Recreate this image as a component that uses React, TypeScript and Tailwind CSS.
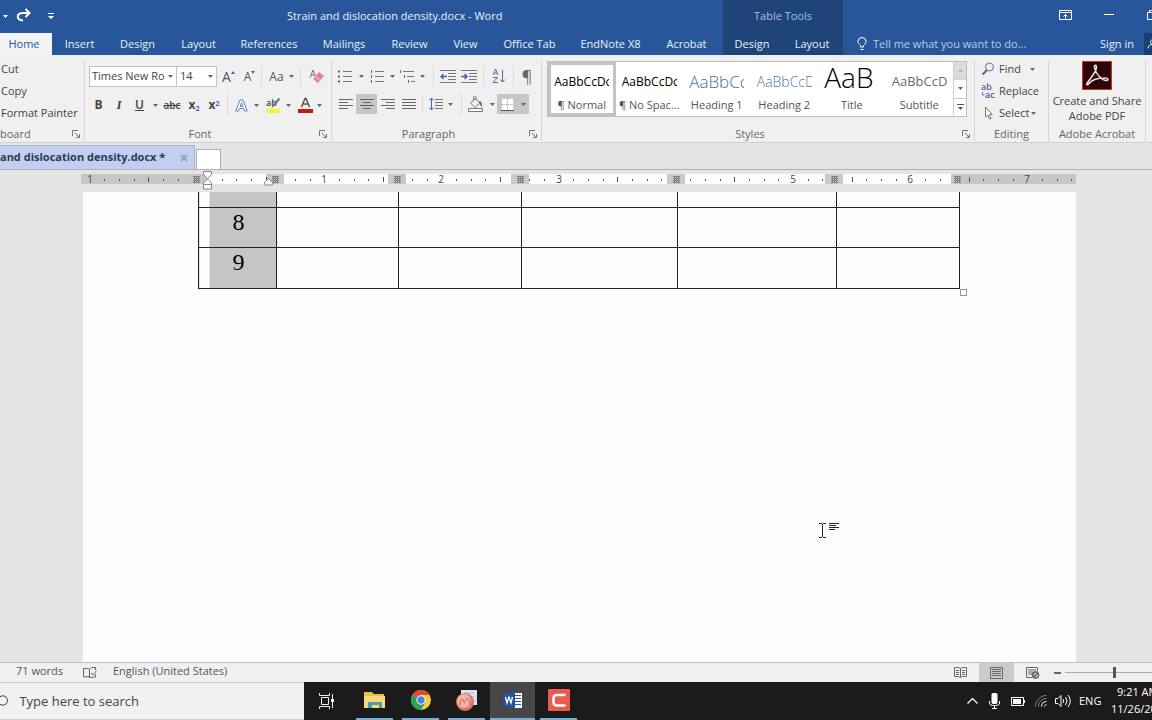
import type { ReactNode } from "react";
import clsx from "clsx";

const tabs = [
  { label: "Insert", width: "w-[55px]" },
  { label: "Design", width: "w-[61px]" },
  { label: "Layout", width: "w-[61px]" },
  { label: "References", width: "w-[80px]" },
  { label: "Mailings", width: "w-[70px]" },
  { label: "Review", width: "w-[61px]" },
  { label: "View", width: "w-[51px]" },
  { label: "Office Tab", width: "w-[77px]" },
  { label: "EndNote X8", width: "w-[85px]" },
  { label: "Acrobat", width: "w-[67px]" },
];

const styles = [
  { name: "¶ Normal", sample: "AaBbCcDc", look: "text-xs text-black" },
  { name: "¶ No Spac...", sample: "AaBbCcDc", look: "text-xs text-black" },
  { name: "Heading 1", sample: "AaBbCc", look: "text-[17px] font-light text-[#3f719f]" },
  { name: "Heading 2", sample: "AaBbCcD", look: "text-sm font-light text-[#4a79a5]" },
  { name: "Title", sample: "AaB", look: "text-[28px] font-light text-black" },
  { name: "Subtitle", sample: "AaBbCcD", look: "text-[13px] text-[#6a6a6a]" },
];

const columns = ["w-[78px]", "w-[122px]", "w-[123px]", "w-[156px]", "w-[159px]", "w-[123px]"];

const rows = [
  { value: "", height: "h-[15px]" },
  { value: "8", height: "h-10" },
  { value: "9", height: "h-[41px]" },
];

function Caret({ className = "w-[10px]" }: { className?: string }) {
  return (
    <span className={clsx("flex shrink-0 items-center justify-center text-[#666]", className)}>
      <svg width="5" height="3" viewBox="0 0 5 3" fill="currentColor">
        <path d="M0 0h5L2.5 3z" />
      </svg>
    </span>
  );
}

function Tool({ label, className, children }: { label: string; className: string; children: ReactNode }) {
  return (
    <button aria-label={label} className={clsx("flex h-5 shrink-0 items-center justify-center", className)}>
      {children}
    </button>
  );
}

function Divider({ className }: { className?: string }) {
  return <span className={clsx("h-5 w-px shrink-0 bg-[#dadada]", className)} />;
}

function Lines({ rows }: { rows: [number, number][] }) {
  return (
    <svg width="14" height="12" viewBox="0 0 14 12" stroke="#666">
      {rows.map(([from, to], i) => (
        <path key={i} d={`M${from} ${i * 3 + 1.5}H${to}`} />
      ))}
    </svg>
  );
}

function Group({
  label,
  className,
  launcher,
  children,
}: {
  label: string;
  className: string;
  launcher?: boolean;
  children: ReactNode;
}) {
  return (
    <section className={clsx("flex h-20 flex-col border-r border-[#d5d5d5]", className)}>
      <div className="h-[66px] shrink-0">{children}</div>
      <div className="flex h-[14px] items-center px-1 text-[11px] leading-[14px] text-[#666]">
        <span
          className={clsx(
            "flex-1 whitespace-nowrap",
            label === "board" ? "-ml-1" : "text-center",
            launcher && "pr-2",
          )}
        >
          {label}
        </span>
        {launcher && (
          <button aria-label={`${label} settings`}>
            <svg width="8" height="8" viewBox="0 0 8 8" fill="none" stroke="#777">
              <path d="M.5 6V.5H6M3 3l4 4M7.5 4v3.5H4" />
            </svg>
          </button>
        )}
      </div>
    </section>
  );
}

function TitleBar() {
  return (
    <header className="flex h-[55px] shrink-0 bg-[#27579a] text-[11px] text-[#e8f0fb]">
      <div className="flex w-[723px] shrink-0 flex-col">
        <div className="flex h-[33px] items-center">
          <Caret className="w-[11px] text-white" />
          <button aria-label="Redo" className="mb-1 ml-1">
            <svg width="18" height="16" viewBox="0 0 18 16" fill="none" stroke="white" strokeWidth="2">
              <path d="M8 13.500C1 13 1 6 8 6h6M10.500 2 14.500 6l-4 4" />
            </svg>
          </button>
          <button aria-label="Customize quick access" className="ml-[15px]">
            <svg width="6" height="7" viewBox="0 0 6 7" fill="white">
              <path d="M0 0h6v1H0zM0 3h6L3 6z" />
            </svg>
          </button>
          <h1 className="ml-[233px] whitespace-nowrap text-[11px]">Strain and dislocation density.docx - Word</h1>
        </div>
        <nav className="flex h-[22px]">
          <button className="w-[52px] bg-[#f2f3f5] pr-1 text-[#2b579a]">Home</button>
          {tabs.map((tab) => (
            <button key={tab.label} className={clsx("whitespace-nowrap", tab.width)}>
              {tab.label}
            </button>
          ))}
        </nav>
      </div>
      <div className="flex w-[120px] shrink-0 flex-col bg-[#1f4478]">
        <div className="flex h-[33px] items-center justify-center text-[#a9bfe0]">Table Tools</div>
        <div className="flex h-[22px]">
          <button className="w-[58px]">Design</button>
          <button className="w-[62px]">Layout</button>
        </div>
      </div>
      <div className="flex min-w-0 flex-1 flex-col">
        <div className="flex h-[29px] items-center justify-end">
          <button aria-label="Ribbon display options">
            <svg width="13" height="10" viewBox="0 0 13 10" fill="none" stroke="white">
              <path d="M.5.5h12v9H.5zM.5 2.500h12M6.500 8.500v-4M4.500 6.500l2-2 2 2" />
            </svg>
          </button>
          <button aria-label="Minimize" className="ml-8 h-px w-[10px] bg-white" />
          <button aria-label="Restore" className="ml-[33px]">
            <svg width="5" height="10" viewBox="0 0 5 10" fill="none" stroke="white">
              <path d="M5 2.500H.5v7H5M2.500 2.500v-2H5" />
            </svg>
          </button>
        </div>
        <div className="mt-1 flex h-[22px] items-center">
          <svg className="ml-[14px] shrink-0" width="10" height="14" viewBox="0 0 10 14" fill="none" stroke="white">
            <path d="M3.500 10V8.500C2 7 1 6 1 4.500a4 4 0 0 1 8 0C9 6 8 7 6.500 8.500V10zM3.500 12.500h3" />
          </svg>
          <input
            aria-label="Tell me what you want to do"
            placeholder="Tell me what you want to do..."
            className="ml-1.5 min-w-0 flex-1 bg-transparent placeholder:text-[#b4cbed] placeholder:opacity-100"
          />
          <button className="mr-[10px] whitespace-nowrap">Sign in</button>
          <button aria-label="Share" className="flex h-[22px] w-2 items-center justify-end bg-[#1a3f75]">
            <svg width="5" height="10" viewBox="0 0 5 10" fill="none" stroke="white">
              <path d="M5 1C3 1 3 5 5 5M1 9.500C1 7 3 5.500 5 5.500" />
            </svg>
          </button>
        </div>
      </div>
    </header>
  );
}

function FontGroup() {
  return (
    <Group label="Font" className="w-[247px] shrink-0" launcher>
      <div className="flex items-center pt-[5px] pl-1">
        <div className="relative">
          <select
            aria-label="Font name"
            className="h-[21px] w-[88px] appearance-none border border-[#c3c3c3] bg-white pl-0.5 text-[11px] text-[#444]"
          >
            <option>Times New Ro</option>
          </select>
          <Caret className="pointer-events-none absolute top-[9px] right-1 w-[6px]" />
        </div>
        <div className="relative">
          <select
            aria-label="Font size"
            className="h-[21px] w-10 appearance-none border border-l-0 border-[#c3c3c3] bg-white pl-[3px] text-[11px] text-[#444]"
          >
            <option>14</option>
          </select>
          <Caret className="pointer-events-none absolute top-[9px] right-1 w-[6px]" />
        </div>
        <Tool label="Grow font" className="ml-px w-[21px] text-sm text-[#555]">
          A
          <svg className="mb-2" width="4" height="3" viewBox="0 0 4 3" fill="#3c68a8">
            <path d="M0 3h4L2 0z" />
          </svg>
        </Tool>
        <Tool label="Shrink font" className="w-[21px] text-xs text-[#555]">
          A
          <svg className="mb-2" width="4" height="3" viewBox="0 0 4 3" fill="#3c68a8">
            <path d="M0 0h4L2 3z" />
          </svg>
        </Tool>
        <Divider className="ml-px" />
        <Tool label="Change case" className="ml-[5px] w-[19px] text-xs text-[#555]">
          Aa
        </Tool>
        <Caret />
        <Divider className="ml-1" />
        <Tool label="Clear formatting" className="ml-[6px] w-[19px]">
          <svg width="15" height="15" viewBox="0 0 15 15">
            <path d="M1 9 4 1l3 8M2 6h4" fill="none" stroke="#777" />
            <path d="m10 3 5 4-6 7-5-4z" fill="#e2849c" />
            <path d="m6 7.500 5 4" stroke="#f7d3dc" />
          </svg>
        </Tool>
      </div>
      <div className="flex items-center pt-[8px] pl-[3px] text-[#444]">
        <Tool label="Bold" className="w-[21px] text-xs font-bold">
          B
        </Tool>
        <Tool label="Italic" className="w-5 font-['Liberation_Serif',serif] text-[13px] font-bold italic">
          I
        </Tool>
        <Tool label="Underline" className="w-[21px] text-xs font-semibold underline">
          U
        </Tool>
        <Caret />
        <Tool label="Strikethrough" className="w-6 text-[10px] font-semibold line-through">
          abc
        </Tool>
        <Tool label="Subscript" className="w-5 text-xs font-bold">
          <span>
            x<sub className="text-[7px] text-[#3c68a8]">2</sub>
          </span>
        </Tool>
        <Tool label="Superscript" className="w-5 text-xs font-bold">
          <span>
            x<sup className="text-[7px] text-[#3c68a8]">2</sup>
          </span>
        </Tool>
        <Divider className="ml-[3px]" />
        <Tool label="Text effects" className="ml-1 w-[19px]">
          <svg width="13" height="13" viewBox="0 0 13 13" fill="white" stroke="#5a83bd">
            <path d="M.8 12 5 1h3l4.200 11H9.500l-.8-2.500H4.300L3.500 12zM5.200 7.500h2.600L6.500 3.500z" />
          </svg>
        </Tool>
        <Caret />
        <Tool label="Highlight" className="ml-[3px] w-5">
          <svg width="16" height="16" viewBox="0 0 16 16">
            <path d="M0 12h14v4H0z" fill="#f8f032" />
            <text x="0" y="9" fontSize="9" fontWeight="600" fill="#444">
              ab
            </text>
            <path d="m14.500 2-6 7-3 2 1-3 6-7z" fill="#777" />
          </svg>
        </Tool>
        <Caret className="w-2" />
        <Tool label="Font color" className="ml-1 w-[18px]">
          <svg width="15" height="16" viewBox="0 0 15 16">
            <path d="M0 12h15v4H0z" fill="#c8161d" />
            <path d="M3.500 10 7 1.500h1L11.500 10M4.800 7h5.400" fill="none" stroke="#555" strokeWidth="1.500" />
          </svg>
        </Tool>
        <Caret />
      </div>
    </Group>
  );
}

function ListIcon({ kind }: { kind: "bullets" | "numbers" | "levels" }) {
  if (kind === "levels") {
    return (
      <svg width="17" height="15" viewBox="0 0 17 15" stroke="#777">
        <path d="M4 2.500h11M8 7.500h7M12 12.500h4" />
        <path d="M1.500 1v3M5.500 6v3M9.500 11v3" stroke="#4b74ad" />
      </svg>
    );
  }
  return (
    <svg width="14" height="15" viewBox="0 0 14 15" stroke="#777">
      <path d="M5 2.500h9M5 7.500h9M5 12.500h9" />
      {kind === "bullets" ? (
        <path d="M0 2.500h2M0 7.500h2M0 12.500h2" stroke="#4b6791" strokeWidth="2" />
      ) : (
        <path d="M1.500 1v3M1.500 6v3M1.500 11v3" stroke="#4b6791" />
      )}
    </svg>
  );
}

function IndentIcon({ increase }: { increase?: boolean }) {
  return (
    <svg width="16" height="13" viewBox="0 0 16 13" fill="none" stroke="#777">
      <path d="M0 .5h16M8 3.500h8M8 6.500h8M8 9.500h8M0 12.500h16" />
      <path
        d={increase ? "M0 6.500h6M3.500 4 6 6.500 3.500 9" : "M7 6.500H1M3.500 4 1 6.500 3.500 9"}
        stroke="#3c68a8"
        strokeWidth="1.500"
      />
    </svg>
  );
}

function ParagraphGroup() {
  return (
    <Group label="Paragraph" className="w-[210px] shrink-0" launcher>
      <div className="flex items-center pt-[5px] pl-[3px]">
        <Tool label="Bullets" className="w-5">
          <ListIcon kind="bullets" />
        </Tool>
        <Caret className="w-3" />
        <Tool label="Numbering" className="w-5">
          <ListIcon kind="numbers" />
        </Tool>
        <Caret className="w-[10px]" />
        <Tool label="Multilevel list" className="w-[21px]">
          <ListIcon kind="levels" />
        </Tool>
        <Caret className="w-2" />
        <Divider className="ml-[7px]" />
        <Tool label="Decrease indent" className="ml-[3px] w-[21px]">
          <IndentIcon />
        </Tool>
        <Tool label="Increase indent" className="w-[21px]">
          <IndentIcon increase />
        </Tool>
        <Divider className="ml-1" />
        <Tool label="Sort" className="ml-[5px] w-5">
          <svg width="14" height="16" viewBox="0 0 14 16" fill="none" stroke="#4b74ad">
            <path d="m1 7 2.500-6L6 7M2 5h3M1 9.500h4.500L1 14.500h5" />
            <path d="M10.500 2v12M8 11.500l2.500 2.500 2.500-2.500" stroke="#666" />
          </svg>
        </Tool>
        <Divider className="ml-1" />
        <Tool label="Show marks" className="ml-[3px] w-5 text-base text-[#666]">
          ¶
        </Tool>
      </div>
      <div className="flex items-center pt-[8px] pl-[3px]">
        <Tool label="Align left" className="w-[21px]">
          <Lines rows={[[0, 14], [0, 9], [0, 14], [0, 9]]} />
        </Tool>
        <Tool label="Center" className="w-[21px] bg-[#c6c6c6]">
          <Lines rows={[[0, 14], [3, 11], [0, 14], [3, 11]]} />
        </Tool>
        <Tool label="Align right" className="w-[21px]">
          <Lines rows={[[0, 14], [5, 14], [0, 14], [5, 14]]} />
        </Tool>
        <Tool label="Justify" className="w-[21px]">
          <Lines rows={[[0, 14], [0, 14], [0, 14], [0, 14]]} />
        </Tool>
        <Divider className="ml-[3px]" />
        <Tool label="Line spacing" className="ml-1 w-[18px]">
          <svg width="14" height="14" viewBox="0 0 14 14" fill="none" stroke="#777">
            <path d="M6 2.500h8M6 5.500h8M6 8.500h8M6 11.500h8" />
            <path d="M2.500 1v12M.5 3.500l2-2.500 2 2.500M.5 10.500l2 2.500 2-2.500" stroke="#3c68a8" />
          </svg>
        </Tool>
        <Caret />
        <Divider className="ml-[6px]" />
        <Tool label="Shading" className="ml-[3px] w-[22px]">
          <svg width="16" height="16" viewBox="0 0 16 16" fill="none" stroke="#777">
            <path d="m2.500 7 5-4.500L12 7l-5 4.500zM5.500 5V1.500C5.500 0 8 0 8 2v2" />
            <path d="M11 5c3 0 3 3 3 6-2-1-2-3-3-6z" fill="#4b74ad" stroke="none" />
            <path d="M.5 12.500h14v3H.5z" fill="white" />
          </svg>
        </Tool>
        <Caret />
        <div className="flex bg-[#c6c6c6]">
          <Tool label="Borders" className="w-5">
            <svg width="13" height="13" viewBox="0 0 13 13">
              <path d="M0 0h13v13H0z" fill="white" />
              <path d="M.5.5h12v12H.5zM6.500.5v12M.5 6.500h12" fill="none" stroke="#999" strokeDasharray="1 1" />
              <path d="M0 12.500h13" stroke="#555" />
            </svg>
          </Tool>
          <Caret className="w-3" />
        </div>
      </div>
    </Group>
  );
}

function StylesGroup() {
  return (
    <Group label="Styles" className="min-w-0 flex-1" launcher>
      <div className="mr-[7px] ml-[5px] flex h-14 border border-[#bdbdbd] bg-white">
        <div className="flex min-w-0 flex-1">
          {styles.map((style, i) => (
            <button
              key={style.name}
              className={clsx(
                "flex min-w-0 flex-1 flex-col items-center border-[3px]",
                i === 0 ? "border-[#c3c3c3]" : "border-transparent",
              )}
            >
              <span
                className={clsx(
                  "flex h-[31px] w-[55px] overflow-hidden whitespace-nowrap",
                  style.look,
                  style.name === "Title" ? "items-start leading-[25px]" : "items-center pt-[2px]",
                )}
              >
                {style.sample}
              </span>
              <span className="text-[11px] leading-[17px] whitespace-nowrap text-[#555]">{style.name}</span>
            </button>
          ))}
        </div>
        <div className="flex w-[13px] flex-col border-l border-[#d0d0d0] text-[#555]">
          <button aria-label="Scroll up" className="flex flex-1 items-center justify-center bg-[#dcdcdc]">
            <svg width="5" height="3" viewBox="0 0 5 3" fill="#b5b5b5">
              <path d="M0 3h5L2.500 0z" />
            </svg>
          </button>
          <button aria-label="Scroll down" className="flex flex-1 items-center justify-center border-y border-[#d0d0d0]">
            <Caret />
          </button>
          <button aria-label="More styles" className="flex flex-1 items-center justify-center">
            <svg width="7" height="7" viewBox="0 0 7 7" fill="#555">
              <path d="M0 0h7v1H0zM1 3h5L3.500 6z" />
            </svg>
          </button>
        </div>
      </div>
    </Group>
  );
}

function Ribbon() {
  return (
    <div className="flex h-[88px] shrink-0 overflow-hidden border-b border-[#d0d0d0] bg-[#f0f0f0] pt-[6px] text-[11px] text-[#444]">
      <Group label="board" className="w-[85px] shrink-0" launcher>
        <div className="-mt-[3px] flex flex-col items-start pl-px leading-[22px] whitespace-nowrap">
          <button>Cut</button>
          <button>Copy</button>
          <button>Format Painter</button>
        </div>
      </Group>
      <FontGroup />
      <ParagraphGroup />
      <StylesGroup />
      <Group label="Editing" className="w-[74px] shrink-0">
        <div className="-mt-[3px] flex flex-col items-start pl-1.5 leading-[22px] whitespace-nowrap">
          <button className="flex items-center">
            <svg className="mr-1" width="14" height="14" viewBox="0 0 14 14" fill="none" stroke="#4b74ad">
              <circle cx="8.500" cy="5" r="4" />
              <path d="M6 8 1.500 12.500" stroke="#666" strokeWidth="2" />
            </svg>
            Find
            <Caret className="ml-1.5 w-3" />
          </button>
          <button className="flex items-center">
            <svg className="mr-1" width="14" height="16" viewBox="0 0 14 16" fontSize="9" fontWeight="600">
              <text x="0" y="7" fill="#76519a">
                ab
              </text>
              <text x="4" y="15" fill="#3c5f94">
                ac
              </text>
              <path d="M1.500 9v3h2" fill="none" stroke="#4b74ad" />
            </svg>
            Replace
          </button>
          <button className="flex items-center">
            <svg className="mr-1" width="14" height="14" viewBox="0 0 14 14" fill="white" stroke="#777">
              <path d="M4.500 1v10l2.300-2 1.700 4 1.500-.7L8.300 8.500h3z" />
            </svg>
            Select
            <Caret className="w-2" />
          </button>
        </div>
      </Group>
      <Group label="Adobe Acrobat" className="w-[97px] shrink-0">
        <button className="flex w-full flex-col items-center leading-[15px] whitespace-nowrap">
          <svg width="30" height="29" viewBox="0 0 30 29" fill="none">
            <path d="M.5.5h29v28H.5z" fill="#2e0507" stroke="#c8312b" />
            <path
              d="M5 22.500C8 17.500 14.500 11 14.500 6.500c0-3-2.500-3-2 0C13.500 12 19 19 24 19.500c3 .2 2.500-3-1.500-2.500C16 17 9.500 19 6.500 23c-1 1.200-2.500.5-1.500-.5z"
              stroke="#f1e6e6"
              strokeWidth="1.500"
            />
          </svg>
          <span className="mt-[3px]">Create and Share</span>
          <span>Adobe PDF</span>
        </button>
      </Group>
      <div className="w-[6px] shrink-0" />
    </div>
  );
}

function Ruler() {
  const inch = 117.2;
  const zero = 126;
  const ticks = Array.from({ length: 68 }, (_, i) => i - 8).filter((i) => zero + (i * inch) / 8 < 992);
  const markers = [115, 194, 316, 439, 595, 753, 876];

  return (
    <svg className="block" width="995" height="19" viewBox="0 0 995 19">
      <path d="M0 3h995v10H0z" fill="#fdfdfd" />
      <path d="M0 3h126v10H0zM870 3h125v10H870z" fill="#c6c6c6" />
      {markers.slice(1, 6).map((x) => (
        <path key={x} d={`M${x - 9} 3h18v10h-18z`} fill="#c9c9c9" />
      ))}
      {ticks.map((i) => {
        const x = Math.round(zero + (i * inch) / 8);
        if (i === 0 || markers.some((m) => Math.abs(m - x) < 7)) return null;
        if (i % 8 === 0) {
          return (
            <text key={i} x={x} y="12" fontSize="10" textAnchor="middle" fill="#444">
              {Math.abs(i / 8)}
            </text>
          );
        }
        return <path key={i} d={i % 4 === 0 ? `M${x} 6v5h1v-5z` : `M${x} 8v2h1v-2z`} fill="#555" />;
      })}
      {markers.map((x) => (
        <path
          key={x}
          d={`M${x - 3} 5.500h7M${x - 3} 7.500h7M${x - 3} 9.500h7M${x - 3} 11.500h7M${x - 1.5} 5v7M${x + 0.5} 5v7M${x + 2.5} 5v7`}
          stroke="#808080"
        />
      ))}
      <path
        d="M122.500.5h8v3l-4 4.500-4-4.500zM126.500 8l4 4v6h-8v-6zM122.500 13.500h8M187.500 7.500l4 4v2.500h-8v-2.500z"
        fill="white"
        stroke="#888"
      />
    </svg>
  );
}

function DocumentPage() {
  return (
    <main className="flex min-h-0 flex-1 overflow-hidden bg-[#e5e5e5] pr-[76px] pl-[83px]">
      <div className="relative flex-1 bg-[#fdfdfd]">
        <table className="ml-[115px] w-[762px] table-fixed border-collapse font-['Liberation_Serif',serif] text-2xl text-black">
          <colgroup>
            {columns.map((width, i) => (
              <col key={i} className={width} />
            ))}
          </colgroup>
          <tbody>
            {rows.map((row, r) => (
              <tr key={r} className={row.height}>
                {columns.map((_, col) => (
                  <td
                    key={col}
                    className={clsx(
                      "border border-[#222] p-0 align-top leading-7",
                      r === 0 && "border-t-0",
                      col === 0 && "bg-[linear-gradient(to_right,#fdfdfd_10px,#c5c5c5_10px)] pl-0.5 text-center",
                    )}
                  >
                    {col === 0 ? row.value : ""}
                  </td>
                ))}
              </tr>
            ))}
          </tbody>
        </table>
        <span className="absolute top-[97px] left-[877px] h-[7px] w-[7px] border border-[#999] bg-white" />
        <svg className="absolute top-[331px] left-[736px]" width="21" height="16" viewBox="0 0 21 16" fill="none" stroke="#222">
          <path d="M0 .5h3M4 .5h3M0 14.500h3M4 14.500h3M3.500 1v13M10 .5h10M10 2.500h7M10 4.500h10M10 6.500h6" />
        </svg>
      </div>
    </main>
  );
}

function StatusBar() {
  return (
    <footer className="flex h-5 shrink-0 items-center overflow-hidden border-t border-[#c0c0c0] bg-[#f0f0f0] pl-4 text-[11px] text-[#555]">
      <span className="w-[67px] pb-0.5">71 words</span>
      <button aria-label="Proofing">
        <svg width="14" height="12" viewBox="0 0 14 12" fill="none" stroke="#666">
          <path d="M8 10.500 6.500 9.500.5 10V1.500h4l2 1V11M6.500 2l2-1.500h4V3M8 6l2 2 3.500-4.500M12.500 7v3L8 10.500" />
        </svg>
      </button>
      <span className="ml-4 pb-0.5">English (United States)</span>
      <div className="ml-auto flex h-full shrink-0 items-center">
        <button aria-label="Read mode" className="flex w-[38px] justify-center">
          <svg width="13" height="11" viewBox="0 0 13 11" fill="none" stroke="#666">
            <path d="M.5.5h4l2 1 2-1h4v9h-4l-2 1-2-1h-4zM6.500 1v9M2 3.500h3M2 5.500h3M2 7.500h3M8 3.500h3M8 5.500h3M8 7.500h3" />
          </svg>
        </button>
        <button aria-label="Print layout" className="flex h-full w-[35px] items-center justify-center bg-[#cbcbcb]">
          <svg width="13" height="12" viewBox="0 0 13 12" fill="none" stroke="#666">
            <path d="M.5.5h12v11H.5zM2 2.500h9M2 4.500h9M2 6.500h9M2 8.500h9" />
          </svg>
        </button>
        <button aria-label="Web layout" className="flex w-[37px] justify-center">
          <svg width="14" height="12" viewBox="0 0 14 12" fill="none" stroke="#666">
            <path d="M6 10.500H.5V.5h11v4M2 3h8M2 5h5M2 7h4" />
            <circle cx="9.500" cy="8" r="3.500" fill="#777" />
            <path d="m8 8 2-2M10 10l2-2" stroke="#eee" />
          </svg>
        </button>
        <button aria-label="Zoom out" className="ml-[3px] h-0.5 w-[7px] bg-[#666]" />
        <div className="ml-1 w-[87px] overflow-hidden">
          <input
            type="range"
            aria-label="Zoom"
            defaultValue={50}
            className="block h-3 w-[98px] appearance-none bg-[linear-gradient(#aaa,#aaa)] bg-size-[100%_1px] bg-center bg-no-repeat [&::-webkit-slider-thumb]:h-[11px] [&::-webkit-slider-thumb]:w-[3px] [&::-webkit-slider-thumb]:appearance-none [&::-webkit-slider-thumb]:bg-[#555]"
          />
        </div>
      </div>
    </footer>
  );
}

function TaskButton({
  label,
  active,
  className,
  children,
}: {
  label: string;
  active?: boolean;
  className: string;
  children: ReactNode;
}) {
  return (
    <button
      aria-label={label}
      className={clsx(
        "flex h-full items-center justify-center border-b-2 border-[#76b0dd]",
        active && "bg-[#474747]",
        className,
      )}
    >
      {children}
    </button>
  );
}

function Taskbar() {
  return (
    <div className="flex h-[38px] shrink-0 overflow-hidden bg-[#1b1b1b] text-white">
      <label className="flex h-full w-[304px] shrink-0 items-center border-y border-[#cfcfcf] bg-[#f1f1f1] pt-0.5 text-[#333]">
        <svg className="mb-1" width="9" height="11" viewBox="0 0 9 11" fill="none" stroke="#333">
          <circle cx="3" cy="5.500" r="5" />
        </svg>
        <input
          aria-label="Search"
          placeholder="Type here to search"
          className="ml-[11px] w-full bg-transparent text-[13px] placeholder:text-[#444] placeholder:opacity-100"
        />
      </label>
      <button aria-label="Task view" className="flex w-[52px] items-center pl-[15px]">
        <svg width="16" height="16" viewBox="0 0 16 16" fill="none" stroke="#eee">
          <path d="M.5 0v2.500h10V0M.5 16v-2.500h10V16M2.500 4.500h7v7h-7zM13.500 1v14" />
          <path d="M12 6h3v3h-3z" fill="#eee" stroke="none" />
        </svg>
      </button>
      <TaskButton label="File Explorer" className="w-[37px]">
        <svg width="21" height="18" viewBox="0 0 21 18">
          <path d="M0 1h8l2 2h10v14H0z" fill="#e9bc4b" />
          <path d="M0 5h21v12H0z" fill="#f8da78" />
          <path d="M4 11h14v6h-3v-3H8v3H4z" fill="#4f9cad" />
        </svg>
      </TaskButton>
      <TaskButton label="Chrome" className="ml-[9px] w-[37px]">
        <svg width="20" height="20" viewBox="0 0 20 20">
          <circle cx="10" cy="10" r="10" fill="#f7cc3b" />
          <path d="M10 10 1.300 5A10 10 0 0 1 18.700 5H10z" fill="#dd4b3e" />
          <path d="M1.300 5A10 10 0 0 0 10 20l4.300-7.500L10 10z" fill="#2f9e58" />
          <circle cx="10" cy="10" r="4.700" fill="white" />
          <circle cx="10" cy="10" r="3.700" fill="#4a86e0" />
        </svg>
      </TaskButton>
      <TaskButton label="Origin" className="ml-[9px] w-[37px]">
        <svg width="22" height="21" viewBox="0 0 22 21">
          <path d="M5 0h16v15H5z" fill="#dce4f3" />
          <path d="M8 3h10M14 7h5M16 11h4" stroke="#a9bbdd" />
          <circle cx="9" cy="12" r="9" fill="#e4705f" />
          <circle cx="8" cy="11" r="7" fill="#f4b3a6" />
          <path d="M4 15c0-5 2-7 3-5s1 4 2 2 3-5 4-2 0 4 1 5" fill="none" stroke="#cf5b4e" />
        </svg>
      </TaskButton>
      <TaskButton label="Word" active className="ml-[5px] w-[45px]">
        <svg width="20" height="20" viewBox="0 0 20 20">
          <path d="M10 3h9v15h-9z" fill="white" />
          <path d="M11 5.500h7M11 8.500h7M11 11.500h7M11 14.500h7" stroke="#31558f" />
          <path d="M0 4 12 1v18L0 16z" fill="#23529b" />
          <path d="m2.500 7 1.500 6 2-6 2 6 1.500-6" fill="none" stroke="white" strokeWidth="1.300" />
        </svg>
      </TaskButton>
      <TaskButton label="Camtasia" className="ml-[5px] w-[37px]">
        <svg width="22" height="22" viewBox="0 0 22 22" fill="none">
          <rect width="22" height="22" rx="1" fill="#ea5a4f" />
          <path d="M17.500 6H9c-2.500 0-3.500 1-3.500 3v4c0 2 1 3.500 3.500 3.500h8.500" stroke="white" strokeWidth="2.500" />
        </svg>
      </TaskButton>
      <div className="ml-auto flex shrink-0 items-center">
        <svg width="11" height="6" viewBox="0 0 11 6" fill="none" stroke="white" strokeWidth="1.200">
          <path d="m.5 5.500 5-5 5 5" />
        </svg>
        <svg className="ml-[11px]" width="11" height="16" viewBox="0 0 11 16" fill="none" stroke="white">
          <rect x="3" y=".5" width="5" height="10" rx="1" fill="white" />
          <path d="M.5 8v2c0 2 2 2.500 5 2.500s5-.5 5-2.500V8M5.500 13v2M3 15.500h5" />
        </svg>
        <svg className="ml-[11px]" width="15" height="9" viewBox="0 0 15 9" fill="none" stroke="white">
          <path d="M.5.5h12v8H.5zM13.500 3v3" />
          <path d="M2 2h8v5H2z" fill="white" stroke="none" />
        </svg>
        <svg className="ml-[9px]" width="12" height="12" viewBox="0 0 12 12" fill="none" stroke="#888">
          <path d="M.5 11.500c0-6 5-11 11-11M3.500 11.500c0-4.500 3.500-8 8-8" />
          <path d="M6.500 11.500c0-3 2-5 5-5M9.500 11.500c0-1 1-2 2-2" stroke="white" />
        </svg>
        <svg className="ml-2" width="16" height="14" viewBox="0 0 16 14" fill="none" stroke="white">
          <path d="M.5 4.500H3l3-3v11l-3-3H.5zM8 5q1.500 2 0 4M10.500 3q3 4 0 8M13 1q4.500 6 0 12" />
        </svg>
        <span className="ml-2 w-8 text-[11px]">ENG</span>
        <div className="flex w-[41px] flex-col pb-0.5 text-[11px] leading-[17px] whitespace-nowrap">
          <span className="pl-1.5">9:21 AM</span>
          <span>11/26/2020</span>
        </div>
      </div>
    </div>
  );
}

export default function App() {
  return (
    <div className="flex h-screen flex-col overflow-hidden bg-[#e5e5e5] font-['Open_Sans','Noto_Sans',sans-serif]">
      <TitleBar />
      <Ribbon />
      <div className="flex h-[27px] shrink-0 items-end border-b border-[#b0b0b0]">
        <div className="flex h-6 w-[195px] items-center border-t border-r border-[#a9b2cf] bg-[#c3cff0] text-[11px] font-bold whitespace-nowrap text-[#2b3a55]">
          <span className="flex-1">and dislocation density.docx *</span>
          <button aria-label="Close tab" className="mr-[6px]">
            <svg width="8" height="8" viewBox="0 0 8 8" stroke="#97a1b8" strokeWidth="2">
              <path d="m1 1 6 6M7 1 1 7" />
            </svg>
          </button>
        </div>
        <button aria-label="New tab" className="ml-px h-5 w-[25px] border border-b-0 border-[#b0b0b0] bg-white" />
      </div>
      <div className="h-[22px] shrink-0 overflow-hidden pt-[1px] pl-[81px]">
        <Ruler />
      </div>
      <DocumentPage />
      <StatusBar />
      <Taskbar />
    </div>
  );
}
